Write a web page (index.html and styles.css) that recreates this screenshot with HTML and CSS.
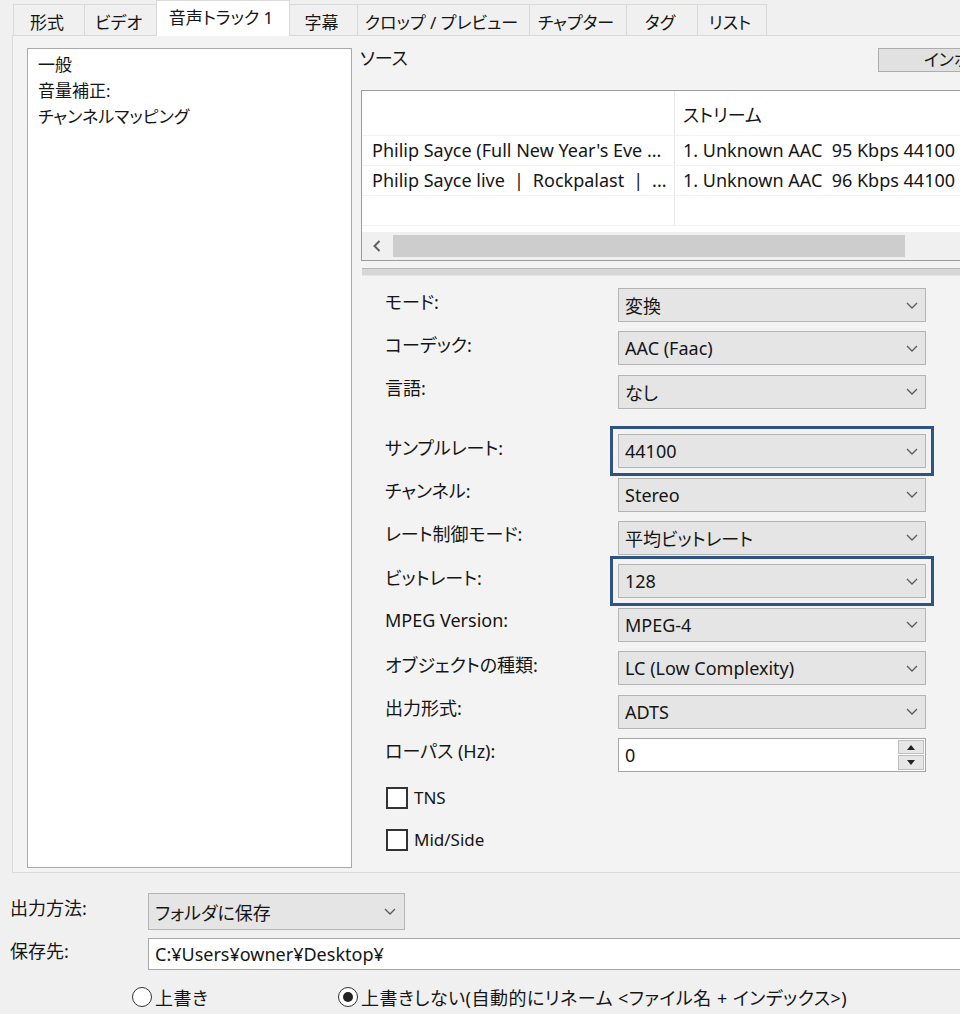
FILE: index.html
```html
<!DOCTYPE html>
<html lang="ja">
<head>
<meta charset="utf-8">
<title>音声トラック</title>
<link rel="stylesheet" href="styles.css">
</head>
<body>
<div class="app">
  <div class="tabs">
    <div class="tab t1">形式</div>
    <div class="tab t2">ビデオ</div>
    <div class="tab t3 active">音声トラック 1</div>
    <div class="tab t4">字幕</div>
    <div class="tab t5">クロップ / プレビュー</div>
    <div class="tab t6">チャプター</div>
    <div class="tab t7">タグ</div>
    <div class="tab t8">リスト</div>
  </div>

  <div class="page">
    <div class="tree">
      <div class="tree-item">一般</div>
      <div class="tree-item">音量補正:</div>
      <div class="tree-item">チャンネルマッピング</div>
    </div>

    <div class="right">
      <div class="source-head">
        <span class="source-label">ソース</span>
        <div class="btn-import">インポート</div>
      </div>

      <div class="listview">
        <div class="lv-header">
          <div class="lv-c1"></div>
          <div class="lv-c2">ストリーム</div>
        </div>
        <div class="lv-row">
          <div class="lv-c1">Philip Sayce (Full New Year's Eve ...</div>
          <div class="lv-c2">1. Unknown AAC  95 Kbps 44100 Hz</div>
        </div>
        <div class="lv-row">
          <div class="lv-c1">Philip Sayce live&#x2002;|&#x2002;Rockpalast&#x2002;|&#x2002;...</div>
          <div class="lv-c2">1. Unknown AAC  96 Kbps 44100 Hz</div>
        </div>
        <div class="lv-row">
          <div class="lv-c1"></div>
          <div class="lv-c2"></div>
        </div>
        <div class="lv-fill"></div>
        <div class="hscroll">
          <svg class="hs-arrow" viewBox="0 0 8 12"><polyline points="6.5,1 1.5,6 6.5,11"/></svg>
          <div class="hs-thumb"></div>
        </div>
      </div>

      <div class="splitter"></div>

      <div class="form">
        <div class="frow"><span class="flabel">モード:</span>
          <div class="combo"><span>変換</span><svg class="chev" viewBox="0 0 12 7"><polyline points="1,1 6,6 11,1"/></svg></div></div>
        <div class="frow"><span class="flabel">コーデック:</span>
          <div class="combo"><span>AAC (Faac)</span><svg class="chev" viewBox="0 0 12 7"><polyline points="1,1 6,6 11,1"/></svg></div></div>
        <div class="frow"><span class="flabel">言語:</span>
          <div class="combo"><span>なし</span><svg class="chev" viewBox="0 0 12 7"><polyline points="1,1 6,6 11,1"/></svg></div></div>
        <div class="frow gap-before"><span class="flabel">サンプルレート:</span>
          <div class="combo marked"><span>44100</span><svg class="chev" viewBox="0 0 12 7"><polyline points="1,1 6,6 11,1"/></svg></div></div>
        <div class="frow"><span class="flabel">チャンネル:</span>
          <div class="combo"><span>Stereo</span><svg class="chev" viewBox="0 0 12 7"><polyline points="1,1 6,6 11,1"/></svg></div></div>
        <div class="frow"><span class="flabel">レート制御モード:</span>
          <div class="combo"><span>平均ビットレート</span><svg class="chev" viewBox="0 0 12 7"><polyline points="1,1 6,6 11,1"/></svg></div></div>
        <div class="frow"><span class="flabel">ビットレート:</span>
          <div class="combo marked"><span>128</span><svg class="chev" viewBox="0 0 12 7"><polyline points="1,1 6,6 11,1"/></svg></div></div>
        <div class="frow"><span class="flabel">MPEG Version:</span>
          <div class="combo"><span>MPEG-4</span><svg class="chev" viewBox="0 0 12 7"><polyline points="1,1 6,6 11,1"/></svg></div></div>
        <div class="frow"><span class="flabel">オブジェクトの種類:</span>
          <div class="combo"><span>LC (Low Complexity)</span><svg class="chev" viewBox="0 0 12 7"><polyline points="1,1 6,6 11,1"/></svg></div></div>
        <div class="frow"><span class="flabel">出力形式:</span>
          <div class="combo"><span>ADTS</span><svg class="chev" viewBox="0 0 12 7"><polyline points="1,1 6,6 11,1"/></svg></div></div>
        <div class="frow"><span class="flabel">ローパス (Hz):</span>
          <div class="spin"><span>0</span>
            <div class="spin-btns">
              <div class="spin-btn"><svg viewBox="0 0 8 5"><polygon points="0,5 4,0 8,5"/></svg></div>
              <div class="spin-btn"><svg viewBox="0 0 8 5"><polygon points="0,0 8,0 4,5"/></svg></div>
            </div>
          </div></div>

        <div class="check first"><span class="box"></span><span>TNS</span></div>
        <div class="check"><span class="box"></span><span>Mid/Side</span></div>
      </div>
    </div>
  </div>

  <div class="bottom">
    <div class="brow">
      <span class="blabel">出力方法:</span>
      <div class="combo bcombo"><span>フォルダに保存</span><svg class="chev" viewBox="0 0 12 7"><polyline points="1,1 6,6 11,1"/></svg></div>
    </div>
    <div class="brow second">
      <span class="blabel">保存先:</span>
      <div class="path">C:¥Users¥owner¥Desktop¥</div>
    </div>
    <div class="radios">
      <div class="radio r1"><span class="circle"></span><span>上書き</span></div>
      <div class="radio"><span class="circle on"></span><span>上書きしない(自動的にリネーム &lt;ファイル名 + インデックス&gt;)</span></div>
    </div>
  </div>
</div>
</body>
</html>
```

FILE: styles.css
```css
* { box-sizing: border-box; }

html, body {
  margin: 0;
  padding: 0;
}

body {
  width: 960px;
  height: 1014px;
  overflow: hidden;
  background: #f0f0f0;
  font-family: "Noto Sans", "Noto Sans CJK JP", sans-serif;
  font-size: 18px;
  color: #151515;
  font-feature-settings: "palt";
}

.app {
  width: 1100px;
}

/* ---------- tabs ---------- */
.tabs {
  display: flex;
  align-items: flex-end;
  height: 35px;
  padding-left: 13px;
  position: relative;
  z-index: 2;
  font-size: 17px;
}

.tab {
  height: 31px;
  border-top: 1px solid #d9d9d9;
  border-right: 1px solid #d9d9d9;
  background: #f0f0f0;
  text-align: center;
  padding: 5px 4px 0 0;
  line-height: 25px;
  white-space: nowrap;
}

.tab.t1 { width: 72px; border-left: 1px solid #d9d9d9; }
.tab.t2 { width: 72px; }
.tab.t3 { width: 134px; }
.tab.t4 { width: 68px; }
.tab.t5 { width: 172px; }
.tab.t6 { width: 97px; }
.tab.t7 { width: 71px; }
.tab.t8 { width: 69px; }

.tab.active {
  height: 36px;
  margin-bottom: -1px;
  margin-left: -1px;
  border-left: 1px solid #d9d9d9;
  background: #ffffff;
  padding-top: 5px;
  line-height: 24px;
}

/* ---------- tab page ---------- */
.page {
  display: flex;
  margin-left: 12px;
  height: 838px;
  border: 1px solid #d9d9d9;
  background: #f3f3f3;
  padding: 12px 0 0 14px;
  position: relative;
  z-index: 1;
}

.tree {
  width: 325px;
  height: 820px;
  flex: none;
  background: #ffffff;
  border: 1px solid #a9a9a9;
  padding: 3px 0 0 10px;
  font-size: 17px;
}

.tree-item {
  line-height: 26px;
  white-space: nowrap;
}

.right {
  margin-left: 8px;
  display: flex;
  flex-direction: column;
  width: 740px;
}

.source-head {
  display: flex;
  align-items: flex-start;
  height: 42px;
}

.source-label {
  width: 518px;
  line-height: 20px;
}

.btn-import {
  width: 168px;
  height: 24px;
  background: #e1e1e1;
  border: 1px solid #adadad;
  text-align: center;
  line-height: 21px;
  white-space: nowrap;
  font-size: 17px;
}

/* ---------- list view ---------- */
.listview {
  margin-left: 1px;
  width: 720px;
  height: 171px;
  background: #ffffff;
  border: 1px solid #9c9c9c;
  display: flex;
  flex-direction: column;
}

.lv-header,
.lv-row {
  display: flex;
  flex: none;
}

.lv-header {
  height: 44px;
  align-items: flex-end;
}

.lv-header .lv-c1,
.lv-header .lv-c2 {
  height: 44px;
  padding-top: 13px;
  line-height: 22px;
}

.lv-row {
  height: 30px;
  border-top: 1px solid #f2f2f2;
  line-height: 28px;
}

.lv-c1 {
  width: 313px;
  padding-left: 10px;
  border-right: 1px solid #e8e8e8;
  white-space: pre;
  overflow: hidden;
}

.lv-c2 {
  flex: 1;
  padding-left: 8px;
  white-space: pre;
}

.lv-fill {
  flex: 1;
  border-top: 1px solid #f2f2f2;
}

.hscroll {
  height: 28px;
  flex: none;
  background: #f0f0f0;
  display: flex;
  align-items: center;
  padding-left: 11px;
}

.hs-arrow {
  width: 8px;
  height: 12px;
  fill: none;
  stroke: #606060;
  stroke-width: 2;
}

.hs-thumb {
  margin-left: 12px;
  width: 512px;
  height: 22px;
  background: #cdcdcd;
}

.splitter {
  margin: 7px 0 0 2px;
  height: 8px;
  background: #d6d6d6;
  border-top: 1px solid #b8b8b8;
  border-bottom: 1px solid #e4e4e4;
}

/* ---------- form ---------- */
.form {
  margin-top: 12px;
  padding-left: 25px;
  display: flex;
  flex-direction: column;
  gap: 9.4px;
}

.frow {
  display: flex;
  align-items: center;
  height: 34px;
}

.frow.gap-before {
  margin-top: 16px;
}

.flabel {
  width: 233px;
  padding-bottom: 9px;
  white-space: nowrap;
}

.combo {
  width: 308px;
  height: 34px;
  background: #e5e5e5;
  border: 1px solid #b4b4b4;
  display: flex;
  align-items: center;
  justify-content: space-between;
  padding: 0 7px 0 6px;
  white-space: nowrap;
}

.combo.marked {
  outline: 3px solid #2f5384;
  outline-offset: 5px;
}

.chev {
  width: 12px;
  height: 7px;
  fill: none;
  stroke: #5a5a5a;
  stroke-width: 1.3;
}

.spin {
  width: 308px;
  height: 34px;
  background: #ffffff;
  border: 1px solid #a5a5a5;
  display: flex;
  align-items: center;
  justify-content: space-between;
  padding: 0 1px 0 6px;
}

.spin-btns {
  display: flex;
  flex-direction: column;
  gap: 1px;
  width: 26px;
  height: 30px;
}

.spin-btn {
  flex: 1;
  background: #e6e6e6;
  border: 1px solid #bdbdbd;
  display: flex;
  align-items: center;
  justify-content: center;
}

.spin-btn svg {
  width: 8px;
  height: 5px;
  fill: #222;
}

.check {
  display: flex;
  align-items: center;
  gap: 6px;
  height: 22px;
  margin-top: 10.6px;
  margin-left: 1px;
  font-size: 17px;
}

.check.first {
  margin-top: 5.6px;
}

.box {
  width: 22px;
  height: 22px;
  background: #ffffff;
  border: 2px solid #333;
}

/* ---------- bottom ---------- */
.bottom {
  padding-top: 20px;
}

.brow {
  display: flex;
  align-items: center;
  height: 37px;
}

.brow.second {
  margin-top: 8px;
  height: 32px;
}

.blabel {
  width: 148px;
  padding-left: 10px;
  padding-bottom: 9px;
}

.bcombo {
  width: 257px;
  height: 37px;
  padding-right: 8px;
}

.path {
  width: 900px;
  height: 32px;
  background: #ffffff;
  border: 1px solid #a8a8a8;
  padding-left: 6px;
  line-height: 30px;
}

.radios {
  display: flex;
  align-items: center;
  margin-top: 17px;
  padding-left: 132px;
  height: 20px;
  letter-spacing: 0.5px;
}

.radio {
  display: flex;
  align-items: center;
  gap: 3px;
  white-space: nowrap;
}

.radio.r1 {
  width: 206px;
}

.circle {
  width: 20px;
  height: 20px;
  border: 1.5px solid #333;
  border-radius: 50%;
  background: #ffffff;
  display: flex;
  align-items: center;
  justify-content: center;
}

.circle.on::after {
  content: "";
  width: 10px;
  height: 10px;
  border-radius: 50%;
  background: #222;
}
```
